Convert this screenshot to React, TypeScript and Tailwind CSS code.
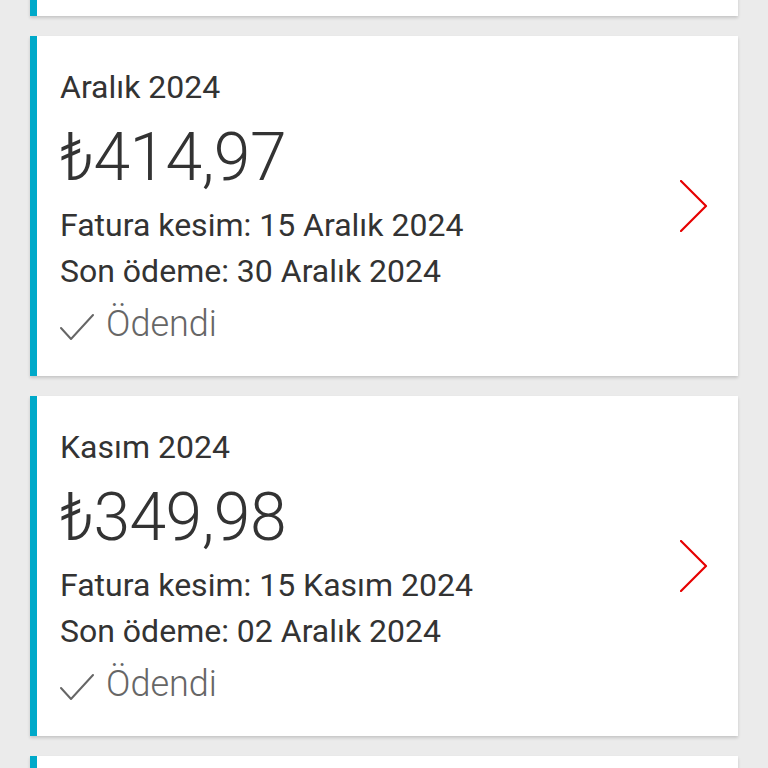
import React from "react";

type Bill = { month: string; amount: string; issue: string; due: string };

const bills: Bill[] = [
  { month: "Ocak 2025", amount: "414,97", issue: "15 Ocak 2025", due: "30 Ocak 2025" },
  { month: "Aralık 2024", amount: "414,97", issue: "15 Aralık 2024", due: "30 Aralık 2024" },
  { month: "Kasım 2024", amount: "349,98", issue: "15 Kasım 2024", due: "02 Aralık 2024" },
  { month: "Ekim 2024", amount: "349,98", issue: "15 Ekim 2024", due: "30 Ekim 2024" },
];

function Card({ b }: { b: Bill }) {
  return (
    <div className="flex h-[340px] bg-white shadow-[0_2px_3px_rgba(0,0,0,0.16)]">
      <div className="w-[7px] shrink-0 bg-[#00a9c9]" />
      <div className="flex flex-1 pl-[23px] pr-[30px]">
        <div className="flex flex-1 flex-col self-start pt-[31px] text-[#333333]">
          <div className="text-[32px] leading-[40px]">{b.month}</div>
          <div className="mt-[15px] text-[66px] font-light leading-[72px] tracking-[-0.5px]">₺{b.amount}</div>
          <div className="mt-[8px] text-[32px] leading-[46px]">Fatura kesim: {b.issue}</div>
          <div className="text-[32px] leading-[46px]">Son ödeme: {b.due}</div>
          <div className="mt-[8px] flex items-center gap-[12px] text-[36px] font-light leading-[44px] text-[#666666]">
            <svg width="34" height="28" viewBox="0 0 34 28" fill="none" className="mt-[6px]">
              <path d="M1 15 L11 26 L33 2" stroke="#666666" strokeWidth="2" strokeLinecap="round" strokeLinejoin="round" />
            </svg>
            <span>Ödendi</span>
          </div>
        </div>
        <svg width="28" height="52" viewBox="0 0 28 52" fill="none" className="self-center">
          <path d="M1 1 L26 26 L1 51" stroke="#e60000" strokeWidth="2.2" strokeLinecap="round" strokeLinejoin="round" />
        </svg>
      </div>
    </div>
  );
}

export default function App() {
  return (
    <div className="h-[768px] w-[768px] overflow-hidden bg-[#ebebeb]" style={{ fontFamily: "Roboto, 'Noto Sans', sans-serif" }}>
      <div className="-mt-[324px] flex flex-col gap-[20px] px-[30px]">
        {bills.map((b) => (
          <Card key={b.month} b={b} />
        ))}
      </div>
    </div>
  );
}
